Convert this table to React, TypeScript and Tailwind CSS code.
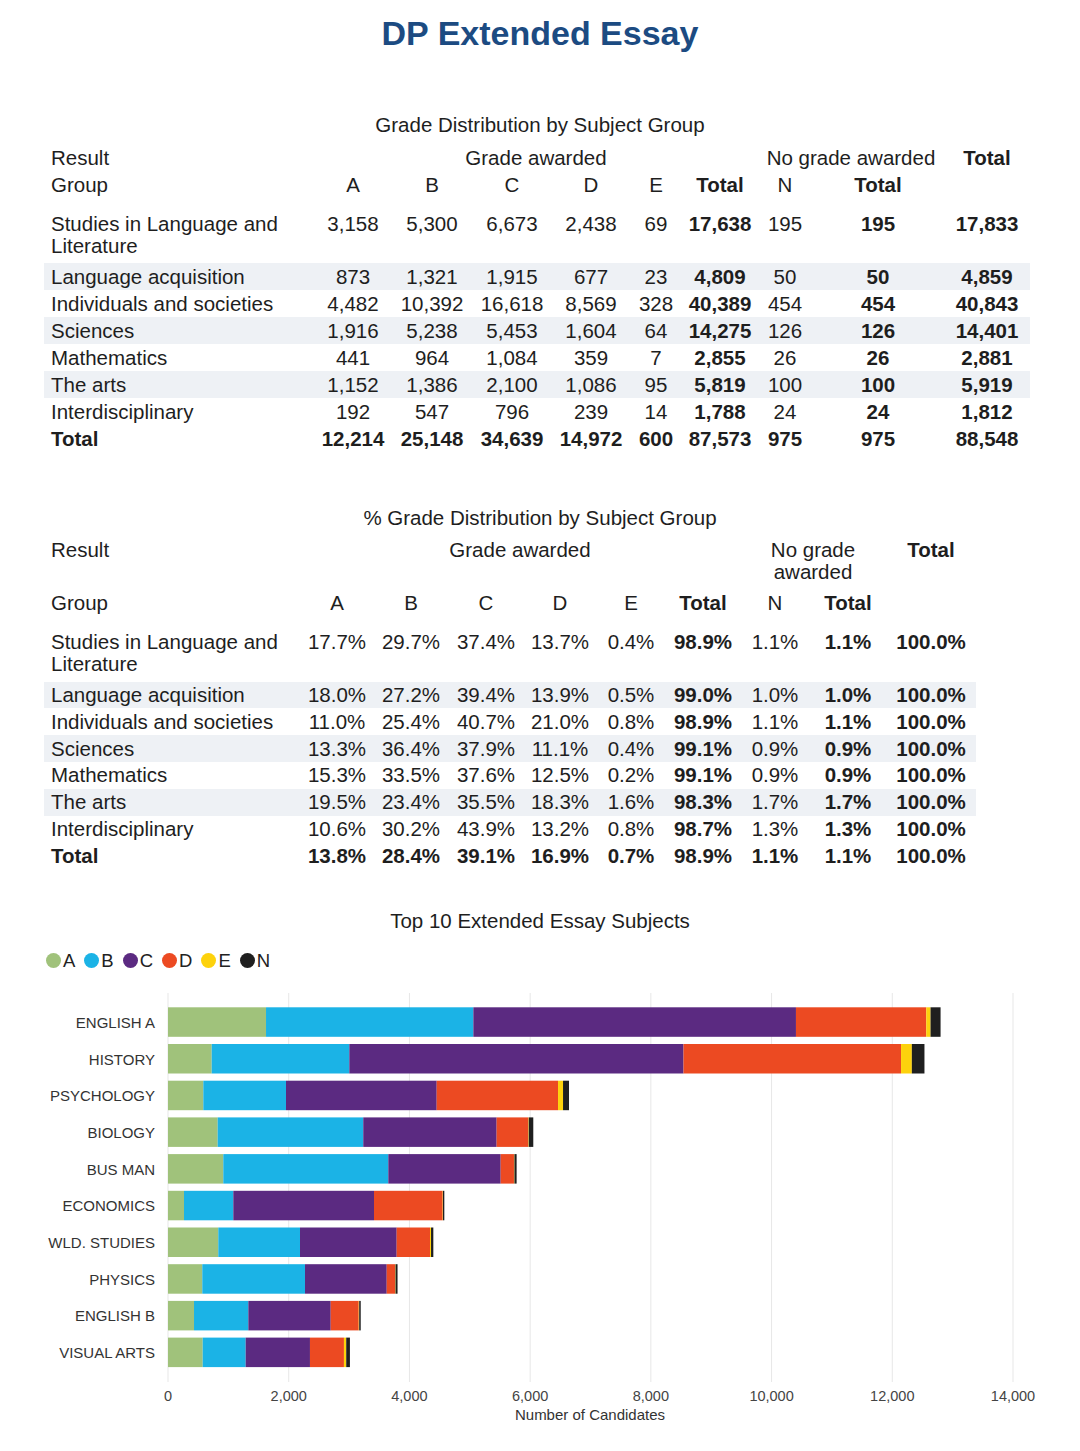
import React from 'react';

const t1Rows = [
  { g: 'Studies in Language and\nLiterature', v: ['3,158', '5,300', '6,673', '2,438', '69', '17,638', '195', '195', '17,833'] },
  { g: 'Language acquisition', v: ['873', '1,321', '1,915', '677', '23', '4,809', '50', '50', '4,859'] },
  { g: 'Individuals and societies', v: ['4,482', '10,392', '16,618', '8,569', '328', '40,389', '454', '454', '40,843'] },
  { g: 'Sciences', v: ['1,916', '5,238', '5,453', '1,604', '64', '14,275', '126', '126', '14,401'] },
  { g: 'Mathematics', v: ['441', '964', '1,084', '359', '7', '2,855', '26', '26', '2,881'] },
  { g: 'The arts', v: ['1,152', '1,386', '2,100', '1,086', '95', '5,819', '100', '100', '5,919'] },
  { g: 'Interdisciplinary', v: ['192', '547', '796', '239', '14', '1,788', '24', '24', '1,812'] },
  { g: 'Total', v: ['12,214', '25,148', '34,639', '14,972', '600', '87,573', '975', '975', '88,548'] },
];

const t2Rows = [
  { g: 'Studies in Language and\nLiterature', v: ['17.7%', '29.7%', '37.4%', '13.7%', '0.4%', '98.9%', '1.1%', '1.1%', '100.0%'] },
  { g: 'Language acquisition', v: ['18.0%', '27.2%', '39.4%', '13.9%', '0.5%', '99.0%', '1.0%', '1.0%', '100.0%'] },
  { g: 'Individuals and societies', v: ['11.0%', '25.4%', '40.7%', '21.0%', '0.8%', '98.9%', '1.1%', '1.1%', '100.0%'] },
  { g: 'Sciences', v: ['13.3%', '36.4%', '37.9%', '11.1%', '0.4%', '99.1%', '0.9%', '0.9%', '100.0%'] },
  { g: 'Mathematics', v: ['15.3%', '33.5%', '37.6%', '12.5%', '0.2%', '99.1%', '0.9%', '0.9%', '100.0%'] },
  { g: 'The arts', v: ['19.5%', '23.4%', '35.5%', '18.3%', '1.6%', '98.3%', '1.7%', '1.7%', '100.0%'] },
  { g: 'Interdisciplinary', v: ['10.6%', '30.2%', '43.9%', '13.2%', '0.8%', '98.7%', '1.3%', '1.3%', '100.0%'] },
  { g: 'Total', v: ['13.8%', '28.4%', '39.1%', '16.9%', '0.7%', '98.9%', '1.1%', '1.1%', '100.0%'] },
];

// A, B, C, D, E, N
const subjects: { name: string; v: number[] }[] = [
  { name: 'ENGLISH A', v: [1624, 3435, 5345, 2159, 71, 166] },
  { name: 'HISTORY', v: [724, 2280, 5537, 3604, 179, 209] },
  { name: 'PSYCHOLOGY', v: [585, 1370, 2497, 2010, 83, 99] },
  { name: 'BIOLOGY', v: [823, 2412, 2210, 524, 8, 75] },
  { name: 'BUS MAN', v: [916, 2734, 1862, 220, 8, 36] },
  { name: 'ECONOMICS', v: [265, 817, 2331, 1138, 5, 22] },
  { name: 'WLD. STUDIES', v: [833, 1354, 1602, 552, 17, 38] },
  { name: 'PHYSICS', v: [568, 1702, 1354, 138, 8, 33] },
  { name: 'ENGLISH B', v: [431, 900, 1365, 464, 8, 25] },
  { name: 'VISUAL ARTS', v: [575, 712, 1065, 563, 38, 61] },
];

const grades = [
  { k: 'A', c: '#a0c27b' },
  { k: 'B', c: '#1bb3e6' },
  { k: 'C', c: '#5b2a81' },
  { k: 'D', c: '#ec4a22' },
  { k: 'E', c: '#fdd20c' },
  { k: 'N', c: '#1f1f1f' },
];

const boldCols = [5, 7, 8];

const DataRow: React.FC<{ g: string; v: string[]; band: boolean; total: boolean; first: boolean; cols: string; h: string }> = ({ g, v, band, total, first, cols, h }) => (
  <div
    className={`grid ${cols} ${band ? 'bg-[#eef1f5]' : ''} ${total ? 'font-bold' : ''} ${
      first ? 'items-start' : `${h} items-center`
    }`}
  >
    <div className="pl-[7px] whitespace-pre-line">{g}</div>
    {v.map((x, i) => (
      <div key={i} className={`text-center ${boldCols.includes(i) ? 'font-bold' : ''}`}>
        {x}
      </div>
    ))}
  </div>
);

const cols1 = 'grid-cols-[270px_78px_80px_80px_78px_52px_76px_54px_132px_86px]';
const cols2 = 'grid-cols-[256px_74px_74px_76px_72px_70px_74px_70px_76px_90px]';

const BarChart: React.FC = () => {
  const x0 = 168;
  const scale = 845 / 14000;
  const ticks = [0, 2000, 4000, 6000, 8000, 10000, 12000, 14000];
  return (
    <svg width={1080} height={458} className="block" fontFamily="'Liberation Sans', Arial, sans-serif">
      {ticks.map(t => (
        <line key={t} x1={x0 + t * scale} x2={x0 + t * scale} y1={21} y2={410} stroke="#e7e7e7" strokeWidth={1} />
      ))}
      {subjects.map((s, i) => {
        const top = 35.3 + i * 36.7;
        let acc = x0;
        return (
          <g key={s.name}>
            <text x={155} y={top + 15} textAnchor="end" dominantBaseline="central" fontSize={15} fill="#333">
              {s.name}
            </text>
            {s.v.map((val, j) => {
              const w = val * scale;
              const r = <rect key={j} x={acc} y={top} width={w} height={29.5} fill={grades[j].c} />;
              acc += w;
              return r;
            })}
          </g>
        );
      })}
      {ticks.map(t => (
        <text key={t} x={x0 + t * scale} y={424} textAnchor="middle" dominantBaseline="central" fontSize={14.5} fill="#444">
          {t.toLocaleString('en-US')}
        </text>
      ))}
      <text x={590} y={442} textAnchor="middle" dominantBaseline="central" fontSize={15} fill="#333">
        Number of Candidates
      </text>
    </svg>
  );
};

const App: React.FC = () => {
  return (
    <div className="w-[1080px] h-[1451px] bg-white text-[#1e1e1e] font-['Liberation_Sans',Arial,sans-serif] overflow-hidden">
      <h1 className="pt-[13px] text-center text-[34px] leading-[40px] font-bold text-[#1c4b82]">DP Extended Essay</h1>

      {/* table 1 */}
      <div className="mt-[60px] text-[20.5px] leading-[22px]">
        <div className="h-[24px] leading-[24px] text-center">Grade Distribution by Subject Group</div>
        <div className="ml-[44px] w-[986px] mt-[7px]">
          <div className={`grid ${cols1} h-[27px] items-center`}>
            <div className="pl-[7px]">Result</div>
            <div className="col-span-6 text-center">Grade awarded</div>
            <div className="col-span-2 text-center">No grade awarded</div>
            <div className="text-center font-bold">Total</div>
          </div>
          <div className={`grid ${cols1} h-[27px] items-center`}>
            <div className="pl-[7px]">Group</div>
            {['A', 'B', 'C', 'D', 'E', 'Total', 'N', 'Total'].map((h, i) => (
              <div key={i} className={`text-center ${h === 'Total' ? 'font-bold' : ''}`}>
                {h}
              </div>
            ))}
            <div />
          </div>
          <div className="pt-[15px] pb-[6px]">
            <DataRow {...t1Rows[0]} band={false} total={false} first cols={cols1} h="h-[27px]" />
          </div>
          {t1Rows.slice(1).map((r, i) => (
            <DataRow key={r.g} {...r} band={i % 2 === 0 && i < 6} total={r.g === 'Total'} first={false} cols={cols1} h="h-[27px]" />
          ))}
        </div>
      </div>

      {/* table 2 */}
      <div className="mt-[54px] text-[20.5px] leading-[22px]">
        <div className="h-[24px] leading-[24px] text-center">% Grade Distribution by Subject Group</div>
        <div className="ml-[44px] w-[932px] mt-[9px]">
          <div className={`grid ${cols2} items-start`}>
            <div className="pl-[7px]">Result</div>
            <div className="col-span-6 text-center">Grade awarded</div>
            <div className="col-span-2 text-center">
              No grade
              <br />
              awarded
            </div>
            <div className="text-center font-bold">Total</div>
          </div>
          <div className={`grid ${cols2} mt-[9px]`}>
            <div className="pl-[7px]">Group</div>
            {['A', 'B', 'C', 'D', 'E', 'Total', 'N', 'Total'].map((h, i) => (
              <div key={i} className={`text-center ${h === 'Total' ? 'font-bold' : ''}`}>
                {h}
              </div>
            ))}
            <div />
          </div>
          <div className="pt-[17px] pb-[6.5px]">
            <DataRow {...t2Rows[0]} band={false} total={false} first cols={cols2} h="h-[26.85px]" />
          </div>
          {t2Rows.slice(1).map((r, i) => (
            <DataRow key={r.g} {...r} band={i % 2 === 0 && i < 6} total={r.g === 'Total'} first={false} cols={cols2} h="h-[26.85px]" />
          ))}
        </div>
      </div>

      {/* chart */}
      <div className="mt-[39.5px]">
        <div className="h-[24px] leading-[24px] text-[20.5px] text-center">Top 10 Extended Essay Subjects</div>
        <div className="mt-[17px] h-[22px] pl-[46px] flex items-center gap-[9px] text-[18.5px] text-[#222]">
          {grades.map(g => (
            <div key={g.k} className="flex items-center">
              <span className="w-[15px] h-[15px] rounded-full" style={{ backgroundColor: g.c }} />
              <span className="ml-[2px] leading-[22px]">{g.k}</span>
            </div>
          ))}
        </div>
        <BarChart />
      </div>
    </div>
  );
};

export default App;
